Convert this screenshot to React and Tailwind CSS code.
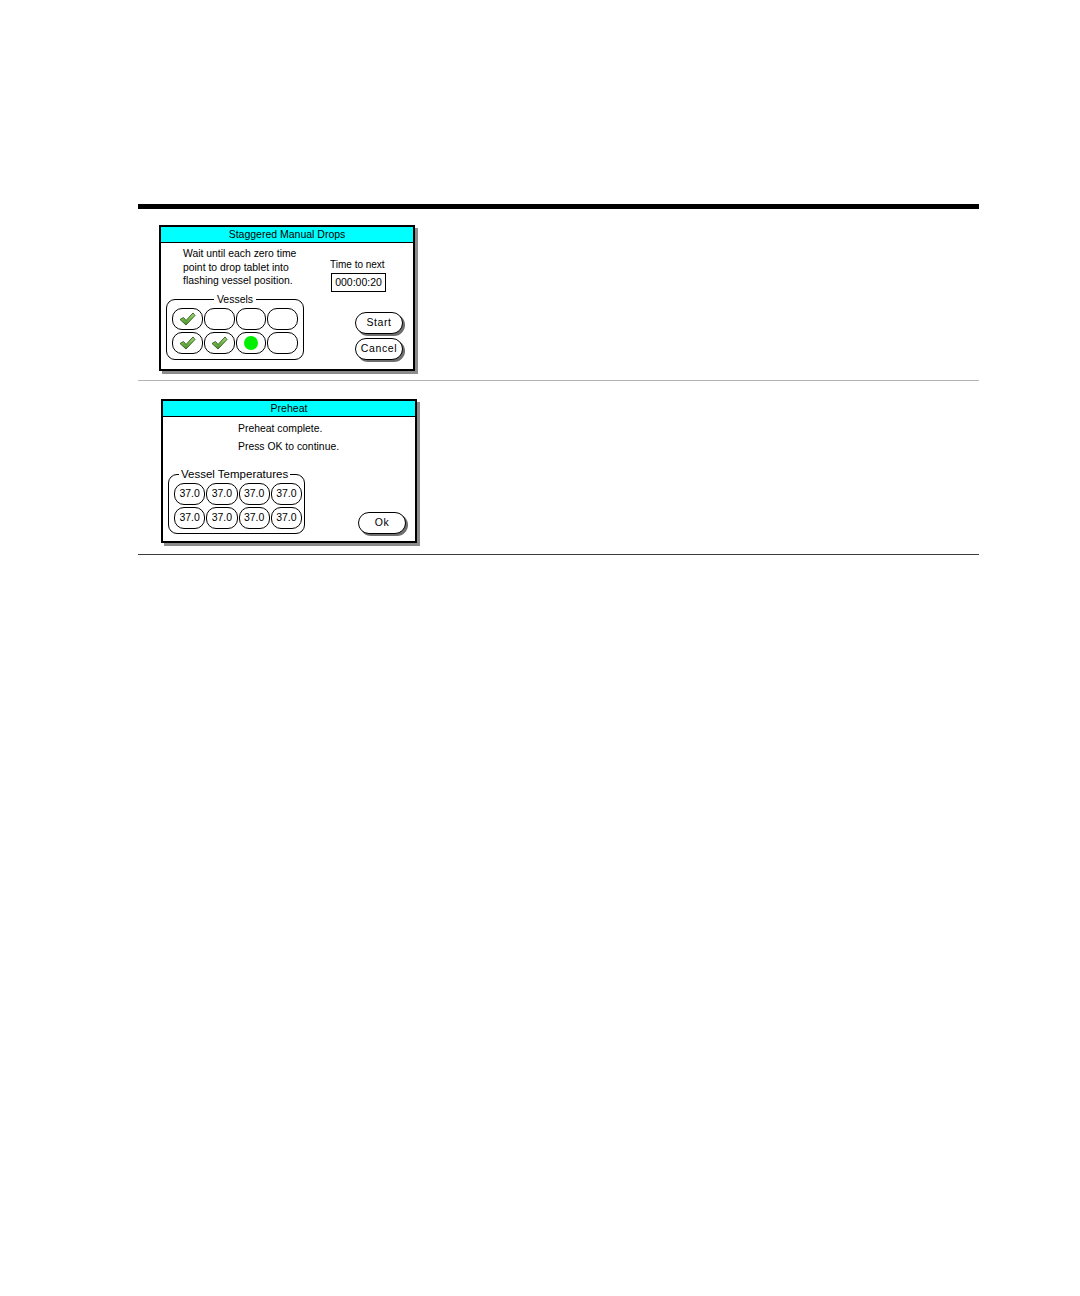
import React from "react";

const font = { fontFamily: '"Liberation Sans", Arial, sans-serif' };

const Check = () => (
  <svg width="17" height="14" viewBox="0 0 17 14">
    <defs>
      <linearGradient id="ck" x1="0" y1="0" x2="0" y2="1">
        <stop offset="0" stopColor="#a8dc78" />
        <stop offset="1" stopColor="#3f8f22" />
      </linearGradient>
    </defs>
    <polygon points="1,7.5 4.5,5.5 7,8.5 14,1 16,3.5 7,13" fill="url(#ck)" stroke="#2c5e1a" strokeWidth="0.9" strokeLinejoin="round" />
  </svg>
);

const Dialog = ({ title, h, children }) => (
  <div className={`w-[256px] ${h} border-2 border-black bg-white shadow-[3px_3px_0_#8c8c8c] flex flex-col`}>
    <div className="h-[16px] shrink-0 bg-[#00ffff] border-b border-black text-center text-[10.5px] leading-[15px] text-black">
      {title}
    </div>
    {children}
  </div>
);

const PillButton = ({ label }) => (
  <div className="w-[48px] h-[22px] rounded-full border border-black bg-white shadow-[2px_2px_0_#6e6e6e] flex items-center justify-center text-[10.5px] tracking-[0.6px] text-black">
    {label}
  </div>
);

const vessels = ["check", "", "", "", "check", "check", "dot", ""];

export default function App() {
  return (
    <div className="min-h-[1296px] w-[1080px] bg-white text-black" style={font}>
      <div className="ml-[138px] pt-[204px] w-[841px]">
        <div className="border-t-[5px] border-black" />

        {/* Row 1 */}
        <div className="h-[172px] border-b border-[#b4b4b4] pl-[21px] pt-[16px]">
          <Dialog title="Staggered Manual Drops" h="h-[146px]">
            <div className="flex flex-1">
              <div className="w-[160px] pl-[5px]">
                <p className="ml-[17px] mt-[4px] text-[10.4px] leading-[13.5px] whitespace-nowrap">
                  Wait until each zero time
                  <br />
                  point to drop tablet into
                  <br />
                  flashing vessel position.
                </p>
                <fieldset className="mt-[6px] w-[138px] h-[66px] rounded-[9px] border border-black px-[5px]">
                  <legend className="mx-auto px-[3px] text-[10.5px] leading-[11px] whitespace-nowrap">Vessels</legend>
                  <div className="mt-[3px] grid grid-cols-4 gap-x-[1px] gap-y-[2px]">
                    {vessels.map((v, i) => (
                      <div key={i} className="h-[22px] rounded-[10px] border border-black flex items-center justify-center">
                        {v === "check" && <Check />}
                        {v === "dot" && <div className="size-[14px] rounded-full bg-[#00ee00]" />}
                      </div>
                    ))}
                  </div>
                </fieldset>
              </div>
              <div className="flex-1 flex flex-col pl-[9px]">
                <div className="mt-[15px] text-[10px] leading-[13px] whitespace-nowrap">Time to next</div>
                <div className="mt-[2px] ml-[1px] w-[55px] h-[19px] border border-black flex items-center justify-center text-[10.5px]">
                  000:00:20
                </div>
                <div className="mt-[20px] ml-[25px] flex flex-col gap-[4px]">
                  <PillButton label="Start" />
                  <PillButton label="Cancel" />
                </div>
              </div>
            </div>
          </Dialog>
        </div>

        {/* Row 2 */}
        <div className="h-[174px] border-b border-[#3c3c3c] pl-[23px] pt-[18px]">
          <Dialog title="Preheat" h="h-[144px]">
            <div className="flex flex-col flex-1">
              <div className="ml-[75px] mt-[3px] text-[10.4px] leading-[18px] whitespace-nowrap">
                <div>Preheat complete.</div>
                <div>Press OK to continue.</div>
              </div>
              <div className="flex items-end">
                <fieldset className="ml-[5px] mt-[11px] w-[137px] h-[67px] rounded-[9px] border border-black pl-[5px] pr-[2px]">
                  <legend className="ml-[5px] px-[2px] text-[11.5px] leading-[14px] whitespace-nowrap">Vessel Temperatures</legend>
                  <div className="mt-[2px] grid grid-cols-4 gap-x-[1px] gap-y-[2px]">
                    {Array.from({ length: 8 }).map((_, i) => (
                      <div key={i} className="h-[22px] rounded-[10px] border border-black flex items-center justify-center text-[10.5px]">
                        37.0
                      </div>
                    ))}
                  </div>
                </fieldset>
                <div className="ml-[53px] mb-[0px]">
                  <PillButton label="Ok" />
                </div>
              </div>
            </div>
          </Dialog>
        </div>
      </div>
    </div>
  );
}
